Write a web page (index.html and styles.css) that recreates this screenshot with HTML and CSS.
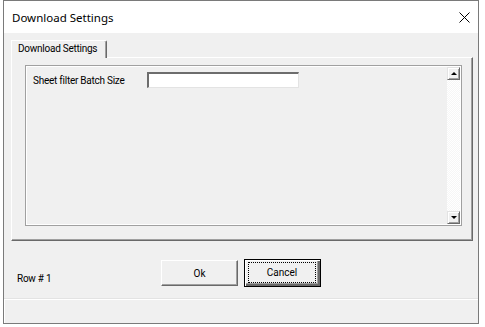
FILE: index.html
```html
<!DOCTYPE html>
<html lang="en">
<head>
    <meta charset="UTF-8">
    <title>Download Settings</title>
    <link rel="stylesheet" href="styles.css">
</head>
<body>
    <div class="window">
        <div class="titlebar">
            <span class="title">Download Settings</span>
            <svg class="close" width="11" height="11" viewBox="0 0 11 11">
                <path d="M0.5 0.5 L10.5 10.5 M10.5 0.5 L0.5 10.5" stroke="#000" stroke-width="1" fill="none"/>
            </svg>
        </div>

        <div class="content">
            <div class="tab">Download Settings</div>
            <div class="page">
                <div class="frame">
                    <div class="frame-body">
                        <div class="field">
                            <label class="field-label" for="batchSize">Sheet filter Batch Size</label>
                            <input class="textbox" type="text" id="batchSize" />
                        </div>
                    </div>
                    <div class="scrollbar">
                        <div class="scroll-btn"><span class="arrow-up"></span></div>
                        <div class="scroll-track"></div>
                        <div class="scroll-btn"><span class="arrow-down"></span></div>
                    </div>
                </div>
            </div>
        </div>

        <div class="footer">
            <span class="row-label">Row # 1</span>
            <div class="buttons">
                <button class="btn">Ok</button>
                <button class="btn btn-default"><span class="focus">Cancel</span></button>
            </div>
            <span></span>
        </div>

        <div class="statusbar"></div>
    </div>
</body>
</html>
```

FILE: styles.css
```css
body {
    margin: 0;
    background: #fff;
    width: 485px;
    height: 327px;
    overflow: hidden;
    font-family: Roboto, 'Liberation Sans', sans-serif;
    font-size: 10px;
    letter-spacing: -0.25px;
    color: #000;
}

.window {
    margin-left: 3px;
    width: 476px;
    height: 324px;
    box-sizing: border-box;
    border: 1px solid #7a7a7a;
    background: #f0f0f0;
    display: flex;
    flex-direction: column;
}

.titlebar {
    height: 32px;
    flex: none;
    background: #fff;
    display: flex;
    align-items: center;
    justify-content: space-between;
    padding: 0 8px 0 8px;
}

.title {
    font-family: 'Noto Sans', sans-serif;
    font-size: 11.5px;
    letter-spacing: 0;
    margin-top: 1px;
}

.close {
    margin-top: 1px;
}

.content {
    padding: 7px 5px 0 7px;
}

.tab {
    position: relative;
    width: 88px;
    height: 17px;
    margin-bottom: -1px;
    padding-left: 6px;
    line-height: 16px;
    background: #f0f0f0;
    border-top: 1px solid #fff;
    border-left: 1px solid #fff;
    border-right: 1px solid #696969;
    box-shadow: inset -1px 0 #a0a0a0;
    border-top-right-radius: 2px;
}

.page {
    height: 175px;
    border-top: 1px solid #fff;
    border-left: 1px solid #fff;
    border-right: 1px solid #696969;
    border-bottom: 1px solid #696969;
    box-shadow: inset -1px -1px #a0a0a0;
    padding: 7px 10px 0 13px;
}

.frame {
    height: 157px;
    border: 1px solid #a0a0a0;
    padding: 1px;
    box-shadow: inset 0 0 0 1px #fff;
    display: flex;
}

.frame-body {
    flex: 1;
    padding: 5px 0 0 6px;
}

.field {
    display: flex;
    align-items: center;
}

.field-label {
    width: 114px;
}

.textbox {
    width: 152px;
    height: 16px;
    box-sizing: border-box;
    margin: 0;
    padding: 0 2px;
    background: #fff;
    border-style: solid;
    border-width: 2px 1px 1px 2px;
    border-color: #6d6d6d #e3e3e3 #e3e3e3 #6d6d6d;
    font: inherit;
}

.scrollbar {
    width: 13px;
    display: flex;
    flex-direction: column;
}

.scroll-btn {
    height: 13px;
    box-sizing: border-box;
    background: #f0f0f0;
    border-top: 1px solid #e3e3e3;
    border-left: 1px solid #e3e3e3;
    border-right: 1px solid #696969;
    border-bottom: 1px solid #696969;
    box-shadow: inset 1px 1px #fff, inset -1px -1px #a0a0a0;
    display: flex;
    align-items: center;
    justify-content: center;
}

.arrow-up,
.arrow-down {
    width: 0;
    height: 0;
    border-left: 3px solid transparent;
    border-right: 3px solid transparent;
}

.arrow-up {
    border-bottom: 3px solid #000;
}

.arrow-down {
    border-top: 3px solid #000;
}

.scroll-track {
    flex: 1;
    background-color: #f6f6f6;
    background-image:
        linear-gradient(45deg, #fff 25%, transparent 25%, transparent 75%, #fff 75%),
        linear-gradient(45deg, #fff 25%, transparent 25%, transparent 75%, #fff 75%);
    background-size: 2px 2px;
    background-position: 0 0, 1px 1px;
}

.footer {
    height: 57px;
    flex: none;
    box-sizing: border-box;
    display: grid;
    grid-template-columns: 1fr auto 1fr;
    align-items: start;
    padding: 18px 13px 0 13px;
}

.row-label {
    margin-top: 14px;
}

.buttons {
    display: flex;
    gap: 6px;
}

.btn {
    width: 77px;
    height: 26px;
    margin: 1px 0 0 0;
    padding: 0;
    background: #f0f0f0;
    border-top: 1px solid #fff;
    border-left: 1px solid #fff;
    border-right: 1px solid #696969;
    border-bottom: 1px solid #696969;
    box-shadow: inset -1px -1px #a0a0a0;
    font: inherit;
    color: #000;
}

.btn-default {
    height: 28px;
    margin-top: 0;
    border: 1px solid #000;
    box-shadow: inset 1px 1px #fff, inset -2px -2px #696969, inset -3px -3px #a0a0a0;
    padding: 3px 5px 4px 4px;
}

.focus {
    display: flex;
    height: 100%;
    align-items: center;
    justify-content: center;
    outline: 1px dotted #000;
}

.statusbar {
    flex: 1;
    border-top: 1px solid #e3e3e3;
    box-shadow: inset 1px 1px #fff;
}
```
